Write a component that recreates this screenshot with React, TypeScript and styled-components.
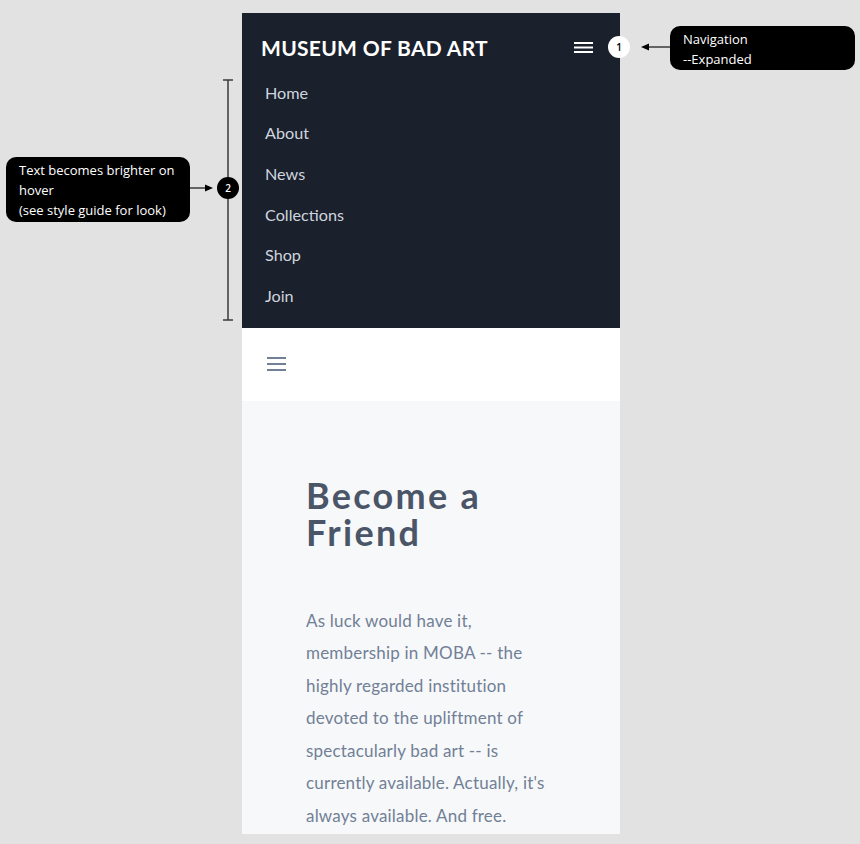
import styled, { createGlobalStyle } from 'styled-components';

const GlobalStyle = createGlobalStyle`
  html, body {
    margin: 0;
    padding: 0;
    background: #e2e2e2;
  }
  * {
    box-sizing: border-box;
  }
`;

const Stage = styled.div`
  position: relative;
  width: 860px;
  height: 844px;
  overflow: hidden;
  padding: 13px 0 0 242px;
  background: #e2e2e2;
`;

const Phone = styled.div`
  width: 378px;
  height: 821px;
  display: flex;
  flex-direction: column;
  overflow: hidden;
  font-family: Lato, "Open Sans", sans-serif;
`;

const NavPanel = styled.nav`
  background: #1a202c;
  padding-bottom: 12px;
`;

const NavHeader = styled.div`
  height: 59px;
  display: flex;
  align-items: center;
  justify-content: space-between;
  padding: 9px 27px 0 19px;
`;

const Brand = styled.div`
  color: #ffffff;
  font-size: 21px;
  font-weight: 700;
  letter-spacing: 0.3px;
`;

const MenuButton = styled.button<{ $color: string }>`
  display: flex;
  align-items: center;
  padding: 0;
  border: 0;
  background: none;
  color: ${p => p.$color};
`;

const NavList = styled.ul`
  list-style: none;
  margin: 0;
  padding: 0 0 0 23px;
`;

const NavLink = styled.li`
  height: 40.67px;
  display: flex;
  align-items: center;
  font-size: 16.2px;
  color: #cfd5de;

  &:hover {
    color: #ffffff;
  }
`;

const Toolbar = styled.div`
  height: 73px;
  background: #ffffff;
  display: flex;
  align-items: center;
  padding-left: 25px;
`;

const Content = styled.main`
  flex: 1;
  background: #f7f8fa;
  padding: 76px 64px 0;
`;

const Heading = styled.h1`
  margin: 0;
  font-size: 36px;
  line-height: 37px;
  font-weight: 700;
  letter-spacing: 2.3px;
  color: #4a5568;
`;

const Lead = styled.p`
  margin: 54px 0 0;
  font-size: 17px;
  line-height: 32.5px;
  letter-spacing: 0.2px;
  color: #718096;
  white-space: nowrap;
`;

const Callout = styled.div<{ $top: number; $left: number; $width: number; $height: number }>`
  position: absolute;
  top: ${p => p.$top}px;
  left: ${p => p.$left}px;
  width: ${p => p.$width}px;
  height: ${p => p.$height}px;
  background: #000000;
  border-radius: 10px;
  padding: 3px 13px;
  color: #ffffff;
  font-family: "Open Sans", "Noto Sans", sans-serif;
  font-size: 13px;
  line-height: 20px;
`;

const Marker = styled.div<{ $top: number; $left: number; $light?: boolean }>`
  position: absolute;
  top: ${p => p.$top}px;
  left: ${p => p.$left}px;
  width: 22px;
  height: 22px;
  border-radius: 50%;
  display: flex;
  align-items: center;
  justify-content: center;
  background: ${p => (p.$light ? '#ffffff' : '#000000')};
  color: ${p => (p.$light ? '#000000' : '#ffffff')};
  font-family: "Open Sans", sans-serif;
  font-size: 10px;
  font-weight: 600;
`;

const Connectors = styled.svg`
  position: absolute;
  top: 0;
  left: 0;
  pointer-events: none;
`;

function Hamburger({ gap, stroke }: { gap: number; stroke: number }) {
  const h = gap * 2 + stroke;
  return (
    <svg width="19" height={h} viewBox={`0 0 19 ${h}`}>
      {[0, 1, 2].map(i => (
        <line
          key={i}
          x1="0"
          x2="19"
          y1={stroke / 2 + i * gap}
          y2={stroke / 2 + i * gap}
          stroke="currentColor"
          strokeWidth={stroke}
        />
      ))}
    </svg>
  );
}

const links = ['Home', 'About', 'News', 'Collections', 'Shop', 'Join'];

const lines = [
  'As luck would have it,',
  'membership in MOBA -- the',
  'highly regarded institution',
  'devoted to the upliftment of',
  'spectacularly bad art -- is',
  "currently available. Actually, it's",
  'always available. And free.',
];

export default function App() {
  return (
    <>
      <GlobalStyle />
      <Stage>
        <Phone>
          <NavPanel>
            <NavHeader>
              <Brand>MUSEUM OF BAD ART</Brand>
              <MenuButton $color="#ffffff">
                <Hamburger gap={4.5} stroke={2} />
              </MenuButton>
            </NavHeader>
            <NavList>
              {links.map(l => (
                <NavLink key={l}>{l}</NavLink>
              ))}
            </NavList>
          </NavPanel>

          <Toolbar>
            <MenuButton $color="#718096">
              <Hamburger gap={6} stroke={2} />
            </MenuButton>
          </Toolbar>

          <Content>
            <Heading>
              Become a<br />
              Friend
            </Heading>
            <Lead>
              {lines.map((l, i) => (
                <span key={i}>
                  {l}
                  <br />
                </span>
              ))}
            </Lead>
          </Content>
        </Phone>

        <Connectors width="860" height="844">
          <g stroke="#3a3a3a" strokeWidth="1.5" fill="none">
            <line x1="228" y1="80" x2="228" y2="320" />
            <line x1="223" y1="80" x2="233" y2="80" />
            <line x1="223" y1="320" x2="233" y2="320" />
            <line x1="190" y1="188" x2="206" y2="188" />
            <line x1="648" y1="47" x2="670" y2="47" />
          </g>
          <polygon points="213,188 205,184.5 205,191.5" fill="#000" />
          <polygon points="641,47 649,43.5 649,50.5" fill="#000" />
        </Connectors>

        <Marker $top={36} $left={608} $light>1</Marker>
        <Marker $top={177} $left={217}>2</Marker>

        <Callout $top={26} $left={670} $width={185} $height={44}>
          Navigation
          <br />
          --Expanded
        </Callout>
        <Callout $top={157} $left={6} $width={184} $height={65}>
          Text becomes brighter on
          <br />
          hover
          <br />
          (see style guide for look)
        </Callout>
      </Stage>
    </>
  );
}
